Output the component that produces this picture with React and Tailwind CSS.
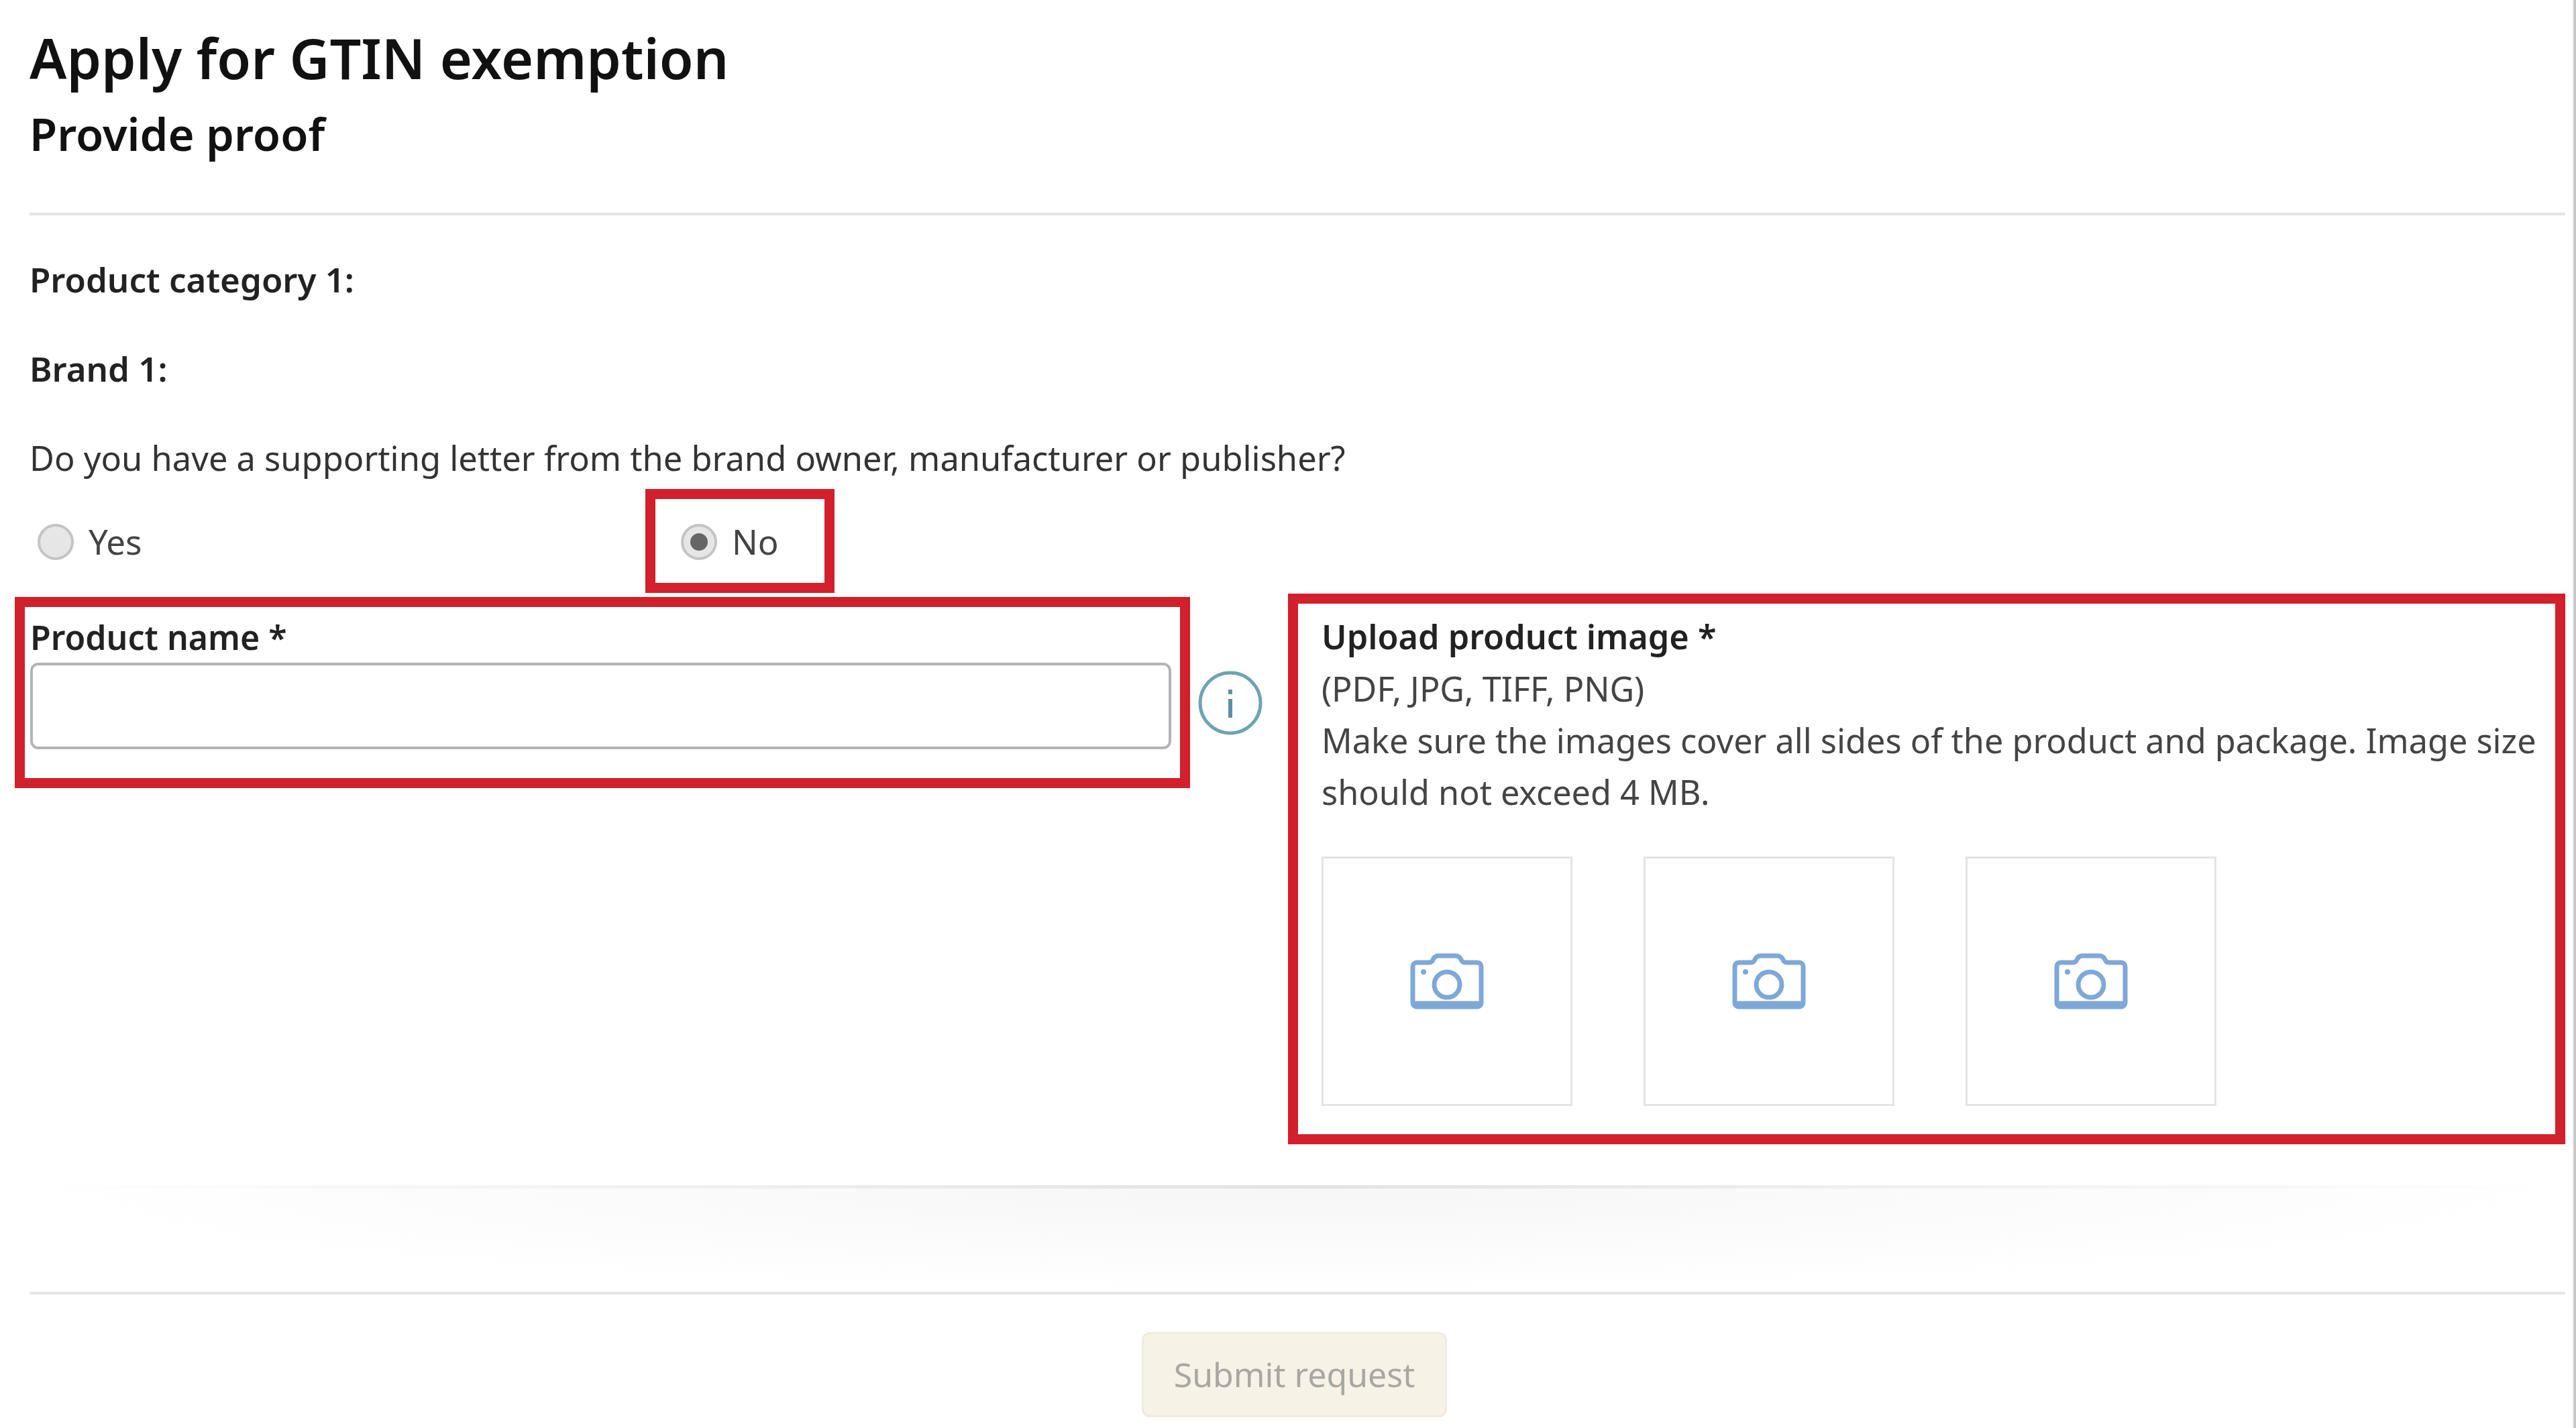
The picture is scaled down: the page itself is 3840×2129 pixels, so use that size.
import React from 'react';

const CameraIcon = () => (
    <svg width="110" height="84" viewBox="0 0 110 84" fill="none" stroke="#7ea8d8" strokeWidth="7">
        <path d="M4 20a6 6 0 0 1 6-6h18c4 0 5-2 7-6 2-3 4-4 7-4h26c3 0 5 1 7 4 2 4 3 6 7 6h18a6 6 0 0 1 6 6v54a6 6 0 0 1-6 6H10a6 6 0 0 1-6-6z" strokeLinejoin="round" />
        <path d="M5 76h100" strokeWidth="9" />
        <circle cx="55" cy="47" r="19" />
        <circle cx="20" cy="28" r="4" fill="#7ea8d8" stroke="none" />
    </svg>
);

const InfoIcon = () => (
    <svg width="96" height="96" viewBox="0 0 96 96" fill="none">
        <circle cx="48" cy="48" r="45" stroke="#6ea3b3" strokeWidth="5" />
        <rect x="45" y="42" width="6" height="28" fill="#5d8fa3" />
        <rect x="45" y="28" width="6" height="7" fill="#5d8fa3" />
    </svg>
);

const Radio = ({ checked }) => (
    <span className="flex h-[54px] w-[54px] shrink-0 items-center justify-center rounded-full border-[4px] border-[#c4c4c4] bg-[#e6e6e6]">
        {checked && <span className="h-[26px] w-[26px] rounded-full bg-[#666666]"></span>}
    </span>
);

export default function App() {
    return (
        <div className="h-[2129px] overflow-hidden border-r-[4px] border-[#c8c8c8] bg-white pl-[22px] pr-[12px] font-['Noto_Sans',sans-serif] text-[#111111]">
            <div className="pl-[22px]">
                <h1 className="pt-[36px] text-[82.5px] font-semibold leading-[100px]">Apply for GTIN exemption</h1>
                <h2 className="mt-[23px] text-[67px] font-semibold leading-[80px]">Provide proof</h2>
                <div className="mt-[78px] h-[4px] bg-[#e4e4e4]"></div>
                <p className="mt-[60px] text-[51px] font-semibold leading-[70px] text-[#222222]">Product category 1:</p>
                <p className="mt-[63px] text-[51px] font-semibold leading-[70px] text-[#222222]">Brand 1:</p>
                <p className="mt-[64px] text-[50.6px] leading-[70px] text-[#333333]">Do you have a supporting letter from the brand owner, manufacturer or publisher?</p>
            </div>

            <div className="mt-[11px] flex h-[155px] items-center">
                <div className="ml-[34px] flex w-[906px] items-center gap-[22px] pt-[2px] text-[51px] text-[#444444]">
                    <Radio />
                    <span>Yes</span>
                </div>
                <div className="flex h-[155px] w-[282px] items-center gap-[22px] border-[15px] border-[#d2202c] pl-[38px] pt-[2px] text-[51px] text-[#444444]">
                    <Radio checked />
                    <span>No</span>
                </div>
            </div>

            <div className="mt-[1px] flex items-start">
                <div className="mt-[5px] h-[285px] w-[1752px] border-[15px] border-[#d2202c] pl-[8px] pr-[13px]">
                    <p className="mt-[11px] text-[50px] font-semibold leading-[68px] text-[#222222]">Product name *</p>
                    <div className="mt-[4px] h-[129px] rounded-[12px] border-[4px] border-[#b4b4b4] bg-white"></div>
                </div>
                <div className="ml-[12px] mt-[115px] shrink-0">
                    <InfoIcon />
                </div>
                <div className="ml-[38px] h-[821px] w-[1904px] border-[15px] border-[#d2202c] pl-[35px] pr-[10px] text-[50.4px] leading-[77px] text-[#444444]">
                    <p className="mt-[15px] font-semibold leading-[68px] text-[#222222]">Upload product image *</p>
                    <p className="mt-[5px]">(PDF, JPG, TIFF, PNG)</p>
                    <p>Make sure the images cover all sides of the product and package. Image size should not exceed 4 MB.</p>
                    <div className="mt-[58px] flex gap-[106px]">
                        {[1, 2, 3].map((tile) => (
                            <div key={tile} className="flex h-[372px] w-[374px] items-center justify-center border-[3px] border-[#e4e4e4]">
                                <CameraIcon />
                            </div>
                        ))}
                    </div>
                </div>
            </div>

            <div className="ml-[22px] mt-[61px]">
                <div className="h-[159px] bg-[radial-gradient(ellipse_50%_100%_at_50%_0%,#f6f6f6,#ffffff)]">
                    <div className="h-[5px] bg-[linear-gradient(to_right,#ffffff,#e2e2e2_50%,#ffffff)]"></div>
                </div>
                <div className="h-[4px] bg-[#e6e6e6]"></div>
                <div className="mt-[56px] flex pl-[1658px]">
                    <button className="h-[127px] w-[455px] rounded-[12px] border-[3px] border-[#f0ebdf] bg-[#f7f2e6] text-[50px] text-[#a9a7a1]">Submit request</button>
                </div>
            </div>
        </div>
    );
}
